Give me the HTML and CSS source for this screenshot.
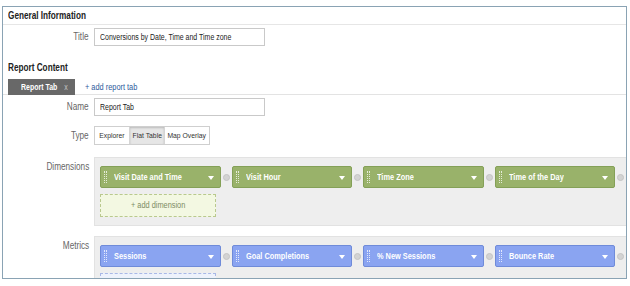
FILE: index.html
```html
<!doctype html>
<html>
<head>
<meta charset="utf-8">
<title>Custom Report</title>
<link rel="stylesheet" href="styles.css">
</head>
<body>
<div class="frame">
	<div class="head"><span class="t">General Information</span></div>
	<div class="row first">
		<span class="lbl"><span class="t">Title</span></span>
		<div class="input"><span class="t">Conversions by Date, Time and Time zone</span></div>
	</div>

	<div class="head2"><span class="t">Report Content</span></div>
	<div class="tabs">
		<span class="tab"><span class="t">Report Tab <span class="close">x</span></span></span>
		<a class="addtab"><span class="t">+ add report tab</span></a>
	</div>
	<div class="row first">
		<span class="lbl"><span class="t">Name</span></span>
		<div class="input"><span class="t">Report Tab</span></div>
	</div>
	<div class="row type">
		<span class="lbl"><span class="t">Type</span></span>
		<div class="seg">
			<span class="b1"><span class="t">Explorer</span></span><span class="b2 on"><span class="t">Flat Table</span></span><span class="b3"><span class="t">Map Overlay</span></span>
		</div>
	</div>

	<div class="row prow dims">
		<span class="lbl"><span class="t">Dimensions</span></span>
		<div class="panel">
			<div class="chips">
				<div class="chip green"><i class="grip"></i><span class="t">Visit Date and Time</span><b class="arr"></b></div><span class="rm"></span>
				<div class="chip green"><i class="grip"></i><span class="t">Visit Hour</span><b class="arr"></b></div><span class="rm"></span>
				<div class="chip green"><i class="grip"></i><span class="t">Time Zone</span><b class="arr"></b></div><span class="rm"></span>
				<div class="chip green"><i class="grip"></i><span class="t">Time of the Day</span><b class="arr"></b></div><span class="rm"></span>
			</div>
			<div class="add dim"><span class="t">+ add dimension</span></div>
		</div>
	</div>

	<div class="row prow mets">
		<span class="lbl"><span class="t">Metrics</span></span>
		<div class="panel">
			<div class="chips">
				<div class="chip blue"><i class="grip"></i><span class="t">Sessions</span><b class="arr"></b></div><span class="rm"></span>
				<div class="chip blue"><i class="grip"></i><span class="t">Goal Completions</span><b class="arr"></b></div><span class="rm"></span>
				<div class="chip blue"><i class="grip"></i><span class="t">% New Sessions</span><b class="arr"></b></div><span class="rm"></span>
				<div class="chip blue"><i class="grip"></i><span class="t">Bounce Rate</span><b class="arr"></b></div><span class="rm"></span>
			</div>
			<div class="add met"></div>
		</div>
	</div>
</div>
</body>
</html>
```

FILE: styles.css
```css
* { margin:0; padding:0; box-sizing:border-box;}
body{ background:#fff; font-family:"Liberation Sans",Arial,sans-serif; font-size:10px; color:#333; white-space:nowrap;}
/* narrow text, like Arial Narrow */
.t{ display:inline-block; transform:scaleX(.82); transform-origin:0 50%;}

.frame{ width:625px; height:273px; margin:6px 0 0 2px; border:1px solid #8aa3b4; overflow:hidden; background:#fff;}

.head{ height:18px; line-height:18px; padding-left:5px; font-weight:bold; font-size:10px; color:#222; border-bottom:1px solid #e6e6e6;}
.head2{ height:16px; line-height:16px; margin-top:14px; padding-left:5px; font-weight:bold; font-size:10px; color:#222;}

.row{ display:flex; align-items:center;}
.row.first{ margin-top:3px;}
.row.type{ margin-top:10px;}
.lbl{ display:flex; justify-content:flex-end; width:86px; margin-right:5px; color:#666; line-height:12px;}
.lbl .t{ transform-origin:100% 50%;}
.input{ width:171px; height:18px; line-height:16px; padding-left:5px; border:1px solid #c9c9c9; color:#222; font-size:8.5px;}

.tabs{ display:flex; align-items:center; height:19px; padding:3px 0 0 5px; border-bottom:1px solid #e3e3e3;}
.tab{ height:16px; line-height:16px; width:67px; padding-left:13px; background:#686868; color:#fff; font-weight:bold; font-size:8.5px;}
.tab .close{ font-weight:normal; color:#c4c4c4; margin-left:6px;}
.addtab{ margin-left:10px; color:#2e5c9c; font-size:9px;}

.seg{ display:flex; height:19px; border:1px solid #cfcfcf; font-size:8px; color:#333;}
.seg > span{ display:flex; justify-content:center; line-height:17px;}
.seg .t{ transform:scaleX(.85); transform-origin:50% 50%;}
.seg .b1{ width:34px;}
.seg .b2{ width:36px; border-left:1px solid #d5d5d5; border-right:1px solid #d5d5d5;}
.seg .b3{ width:44px;}
.seg .on{ background:#e6e6e6; box-shadow:inset 0 1px 2px #bbb;}

.prow{ align-items:flex-start;}
.prow .lbl{ padding-top:4px;}
.dims{ margin-top:12px;}
.mets{ margin-top:10px;}
.panel{ flex:1; min-width:0; background:#eeeeee; border:1px solid #e2e2e2; border-right:none; padding:8px 0 8px 5px;}
.chips{ display:flex; align-items:center;}
.chip{ position:relative; flex:none; width:120.5px; height:22px; line-height:20px; padding-left:13px; border-radius:2px; color:#fff; font-weight:bold; font-size:9px;}
.green{ background:#99b26a; border:1px solid #84a057;}
.blue{ background:#8aa4f1; border:1px solid #6f8bd9;}
.grip{ position:absolute; left:3px; top:4px; width:3px; height:12px; border-left:1px dotted rgba(255,255,255,.75); border-right:1px dotted rgba(255,255,255,.75);}
.arr{ position:absolute; right:6px; top:9px; border-left:3px solid transparent; border-right:3px solid transparent; border-top:4px solid #fff;}
.rm{ flex:none; width:7px; height:7px; margin:0 2px; border-radius:50%; background:#d3d3d3; border:1px solid #c4c4c4;}

.add{ display:flex; justify-content:center; width:116px; height:23px; line-height:21px; margin-top:6px; border:1px dashed #b9c98e; background:#f3f8e2; color:#7d8c63; font-size:9px;}
.add .t{ transform-origin:50% 50%;}
.add.met{ border-color:#a9b8e6; background:#eef2fc;}
```
